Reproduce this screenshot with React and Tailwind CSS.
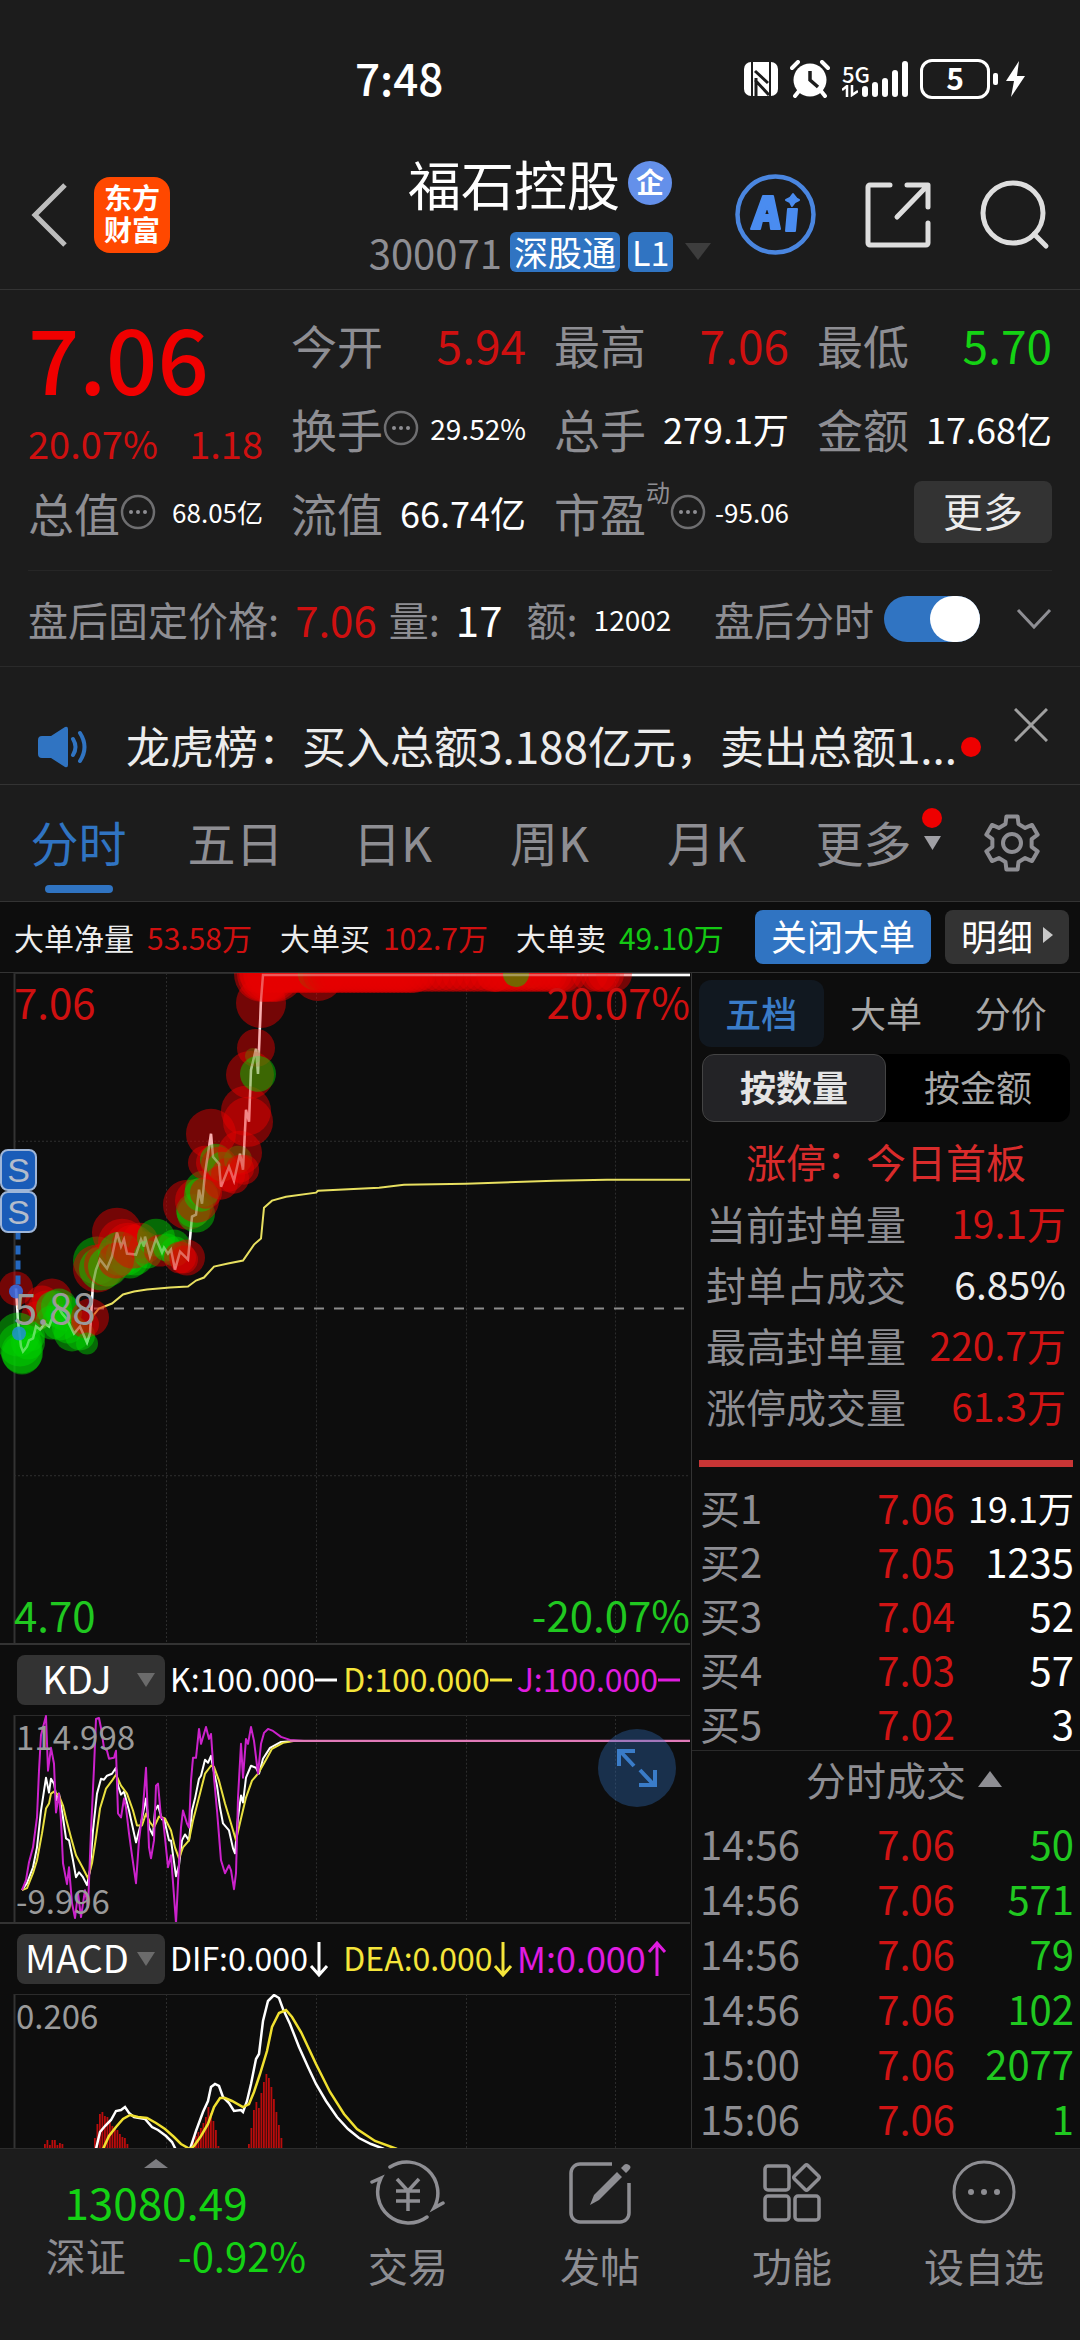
import React, { useState } from 'react';

const FONT = 'font-["Noto_Sans_CJK_SC",sans-serif]';

const quotes = [
  { label: '今开', value: '5.94', size: 'text-[46px]', color: 'text-[#cf1010]' },
  { label: '最高', value: '7.06', size: 'text-[46px]', color: 'text-[#cf1010]' },
  { label: '最低', value: '5.70', size: 'text-[46px]', color: 'text-[#14d214]' },
  { label: '换手', value: '29.52%', size: 'text-[28px]', color: 'text-white', info: true },
  { label: '总手', value: '279.1万', size: 'text-[36px]', color: 'text-white' },
  { label: '金额', value: '17.68亿', size: 'text-[36px]', color: 'text-white' },
  { label: '总值', value: '68.05亿', size: 'text-[26px]', color: 'text-white', info: true },
  { label: '流值', value: '66.74亿', size: 'text-[36px]', color: 'text-white' },
  { label: '市盈', value: '-95.06', size: 'text-[26px]', color: 'text-white', info: true, sup: '动' },
];

const periods = ['分时', '五日', '日K', '周K', '月K', '更多'];

const bigOrders = [
  { label: '大单净量', value: '53.58万', color: 'text-[#cf1010]' },
  { label: '大单买', value: '102.7万', color: 'text-[#cf1010]' },
  { label: '大单卖', value: '49.10万', color: 'text-[#14c814]' },
];

const limitStats = [
  { label: '当前封单量', value: '19.1万', color: 'text-[#d01414]' },
  { label: '封单占成交', value: '6.85%', color: 'text-[#ececec]' },
  { label: '最高封单量', value: '220.7万', color: 'text-[#d01414]' },
  { label: '涨停成交量', value: '61.3万', color: 'text-[#d01414]' },
];

const bids = [
  { name: '买1', price: '7.06', qty: '19.1万', small: true },
  { name: '买2', price: '7.05', qty: '1235' },
  { name: '买3', price: '7.04', qty: '52' },
  { name: '买4', price: '7.03', qty: '57' },
  { name: '买5', price: '7.02', qty: '3' },
];

const trades = [
  ['14:56', '7.06', '50'],
  ['14:56', '7.06', '571'],
  ['14:56', '7.06', '79'],
  ['14:56', '7.06', '102'],
  ['15:00', '7.06', '2077'],
  ['15:06', '7.06', '1'],
];

// Intraday chart
const PRICE =
  '16,316 18,349 21,374 23,379 27,374 29,368 33,366 36,354 40,357 45,351 49,354 54,341 58,334 62,341 67,347 74,361 80,354 87,370 90,361 93,311 96,297 100,287 107,296 112,284 117,260 121,274 124,267 127,281 136,282 141,267 144,274 145,264 150,284 156,266 162,280 164,275 168,281 171,277 175,297 180,279 188,287 192,244 196,242 199,217 202,231 205,201 211,161 213,184 219,191 221,214 229,194 234,208 240,181 243,197 246,137 249,149 251,97 256,76 258,101 261,27 263,2 690,2';
const AVERAGE =
  '21,371 40,357 58,347 87,351 99,336 112,331 123,322 134,319 147,317 170,315 188,314 196,308 204,305 214,294 228,291 243,288 254,272 261,266 264,235 272,228 286,224 316,220 318,218 379,215 404,212 466,211 554,208 607,207 690,207';

const R = '#e60000';
const G = '#00d000';
// [x, y, radius, color]
const BUBBLES = [
  [16, 316, 17, R], [42, 330, 17, R], [52, 326, 20, R], [36, 344, 15, R], [46, 336, 18, R],
  [18, 362, 22, G], [20, 372, 22, G], [22, 382, 20, G], [22, 380, 21, G], [28, 370, 17, G], [30, 364, 15, G],
  [54, 336, 18, G], [59, 334, 18, G], [64, 340, 18, G], [52, 350, 17, G], [60, 350, 18, G],
  [68, 355, 16, G], [72, 361, 18, G], [80, 363, 15, G], [90, 345, 19, R], [85, 352, 14, R], [87, 371, 11, G],
  [97, 288, 24, G], [97, 296, 24, R], [101, 296, 22, G], [106, 292, 22, R], [108, 294, 20, G],
  [117, 260, 25, R], [122, 270, 24, R], [128, 272, 22, R], [120, 281, 22, G], [126, 283, 20, G],
  [130, 288, 18, G], [135, 285, 18, G], [116, 288, 18, R], [133, 274, 22, R], [140, 268, 18, R],
  [145, 275, 16, R], [148, 282, 14, G], [156, 265, 19, G], [160, 278, 16, R], [167, 275, 14, G],
  [174, 273, 16, G], [175, 279, 15, G], [180, 285, 16, R], [187, 285, 18, R], [184, 287, 14, R],
  [188, 232, 25, R], [193, 238, 17, G], [196, 241, 19, G], [197, 228, 22, R], [203, 216, 18, G],
  [201, 222, 17, G], [206, 220, 16, R], [205, 190, 17, R], [211, 161, 25, R], [214, 190, 18, R],
  [216, 187, 16, G], [219, 192, 18, R], [222, 194, 15, G], [221, 210, 17, R], [228, 202, 17, R],
  [234, 206, 15, R], [238, 187, 14, G], [240, 180, 22, R], [244, 197, 15, R], [240, 196, 14, R],
  [246, 138, 25, R], [248, 149, 25, R], [250, 102, 24, R], [253, 83, 8, G], [256, 75, 19, R],
  [258, 101, 18, G], [261, 30, 25, R],
  // at the limit price
  [318, 3, 25, R],
  ...[262, 265, 268, 272, 276].map((x) => [x, 1, 28, R]),
  ...Array.from({ length: 14 }, (_, i) => [258 + i * 4, 1, 19, R]),
  [314, 1, 16, G], [322, 2, 13, G],
  ...Array.from({ length: 26 }, (_, i) => [314 + i * 4, 1, 19, R]),
  ...Array.from({ length: 12 }, (_, i) => [418 + i * 7, 1, 18, R]),
  [518, 1, 14, G], [532, 1, 14, G],
  ...Array.from({ length: 16 }, (_, i) => [494 + i * 5, 1, 18, R]),
  [516, 1, 13, G],
  [590, 1, 18, R], [598, 1, 18, R], [602, 1, 18, R], [606, 1, 18, R], [614, 1, 18, R],
];

const KDJ_K =
  '22,176 27,169 33,153 37,133 41,96 46,63 49,78 51,64 54,69 57,86 59,79 63,103 66,124 69,126 73,146 76,163 79,158 83,163 87,171 90,156 93,116 97,79 101,64 104,65 107,61 112,59 116,53 118,71 121,80 124,77 129,96 136,128 141,109 146,84 149,113 153,121 155,96 158,91 162,105 164,104 169,126 171,126 176,162 179,151 182,126 185,120 189,126 192,96 195,84 199,64 201,61 205,45 208,48 211,41 213,53 217,71 220,93 223,109 229,116 233,134 235,139 238,103 241,81 243,88 246,63 251,51 256,53 259,59 263,44 270,33 281,27 295,26';
const KDJ_D =
  '22,176 27,174 33,159 37,146 42,119 46,94 49,89 51,79 54,77 59,81 63,91 66,104 71,123 76,141 83,154 88,164 92,149 96,123 100,94 106,74 112,66 116,60 121,71 127,79 133,96 137,111 142,111 146,99 150,108 154,113 159,102 165,104 171,116 175,133 179,144 183,133 189,126 193,106 200,79 205,59 211,51 214,52 219,66 225,89 231,109 236,126 241,104 246,83 252,66 258,59 266,45 272,34 283,28 295,26';
const KDJ_J =
  '22,176 26,166 29,148 33,133 37,103 39,56 41,20 46,1 48,56 51,33 54,49 56,98 59,79 61,106 63,149 67,170 69,153 72,189 75,204 78,179 81,203 85,176 88,193 91,116 94,53 96,4 99,3 101,13 104,33 107,36 109,44 114,43 116,36 118,99 121,103 124,84 126,93 129,119 132,141 136,169 139,126 143,93 146,53 149,133 151,144 154,126 156,71 158,69 161,103 163,104 168,153 171,141 176,209 179,149 181,113 183,96 187,109 189,113 191,66 193,43 196,43 199,14 201,29 206,12 209,24 211,19 214,63 217,96 221,146 225,159 229,151 231,156 234,175 236,159 238,83 241,29 243,63 246,24 248,29 251,12 254,26 258,59 261,29 264,18 268,14 273,16 281,22 290,25 304,26';

const DIF =
  '96,155 100,138 105,132 111,126 116,117 121,116 125,113 129,119 134,123 145,125 152,133 158,136 166,142 172,148 176,156 183,170 190,155 196,137 203,118 208,107 211,93 215,90 219,92 223,103 229,109 234,117 241,116 243,118 247,107 251,90 256,65 259,60 263,27 268,7 274,1 279,4 283,15 290,30 299,53 308,73 316,90 326,107 337,123 348,135 359,144 371,150 384,155';
const DEA =
  '103,155 109,142 116,133 123,125 130,121 138,123 147,124 156,129 165,135 174,143 181,150 190,155 194,152 201,142 208,130 214,113 220,104 225,104 232,107 243,113 249,110 254,98 260,80 267,57 272,33 279,19 286,16 292,23 301,38 316,70 330,98 344,120 357,135 375,147 397,155';
const MACD_BARS = [
  { x: 44, heights: [4, 8, 3, 8, 8, 3, 5, 4] },
  { x: 94, heights: [10, 24, 34, 36, 32, 31, 27, 22, 20, 18, 14, 11, 10, 4] },
  { x: 190, heights: [2, 7, 12, 16, 20, 25, 31, 41, 35, 27, 18, 2] },
  { x: 248, heights: [4, 20, 38, 46, 40, 55, 66, 74, 70, 61, 49, 36, 23, 10] },
];

const Grid = ({ height }) => (
  <g fill="none" strokeWidth="1">
    {[166, 316, 466, 615].map((x) => (
      <path key={x} d={`M${x}.5 0V${height}`} stroke="#2c2c2c" strokeDasharray="2 2" />
    ))}
    <path d={`M14.5 0V${height}`} stroke="#333" strokeWidth="2" />
    <path d="M14 .5H690" stroke="#2c2c2c" />
  </g>
);

const Info = () => (
  <svg viewBox="0 0 36 36" className="h-9 w-9 shrink-0" aria-hidden="true">
    <circle cx="18" cy="18" r="16" fill="none" stroke="#6e6e70" strokeWidth="2.5" />
    <g fill="#8e8e93">
      <circle cx="11" cy="18" r="2" />
      <circle cx="18" cy="18" r="2" />
      <circle cx="25" cy="18" r="2" />
    </g>
  </svg>
);

const Gear = () => {
  const points = [];
  for (let i = 0; i < 6; i++) {
    [[-19, 20], [-12, 27], [12, 27], [19, 20]].forEach(([offset, radius]) => {
      const a = ((i * 60 - 90 + offset) * Math.PI) / 180;
      points.push(`${30 + radius * Math.cos(a)},${30 + radius * Math.sin(a)}`);
    });
  }
  return (
    <svg viewBox="0 0 60 60" className="h-[60px] w-[60px]" fill="none" stroke="#8e8e93" strokeWidth="4">
      <polygon points={points.join(' ')} strokeLinejoin="round" />
      <circle cx="30" cy="30" r="9" />
    </svg>
  );
};

const StatusBar = () => (
  <div className="flex h-[140px] items-center pt-[18px] pr-[54px] pl-[355px] text-white">
    <span className="mr-auto pb-1 text-[44px] leading-none font-medium">7:48</span>
    <svg viewBox="0 0 34 34" className="mr-3 h-[34px] w-[34px]">
      <rect width="34" height="34" rx="7" fill="#fff" />
      <path d="M8 0v34M26 0v34" stroke="#1c1c1c" strokeWidth="2" />
      <path d="M11 9L24 21M12 16v18M11 18L25 33" fill="none" stroke="#1c1c1c" strokeWidth="3" />
    </svg>
    <svg viewBox="0 0 40 38" className="mr-3 h-[38px] w-10">
      <circle cx="20" cy="20" r="16.5" fill="#fff" />
      <path d="M2 8L8 2M32 2l6 6M9 31l-4 5M31 31l4 5" stroke="#fff" strokeWidth="4" strokeLinecap="round" />
      <path d="M20 11v9l8 7" fill="none" stroke="#1c1c1c" strokeWidth="3.5" />
    </svg>
    <div className="mr-3 flex items-end">
      <div className="flex flex-col items-start">
        <span className="text-[22px] leading-6 font-medium">5G</span>
        <svg viewBox="0 0 16 12" className="h-3 w-4" fill="none" stroke="#fff" strokeWidth="2.5">
          <path d="M0 5L5 1V12M10 0V10L16 6" />
        </svg>
      </div>
      <svg viewBox="0 0 46 36" className="-ml-2 h-9 w-[46px]" stroke="#fff" strokeWidth="6" strokeLinecap="round">
        <path d="M3 28v5M13 24v9M23 20v13M33 12v21M43 3v30" />
      </svg>
    </div>
    <div className="flex h-10 w-[70px] items-center justify-center rounded-xl border-[3px] border-white pb-1 text-[30px] leading-none font-bold">
      5
    </div>
    <svg viewBox="0 0 36 40" className="h-10 w-9" fill="#fff">
      <rect x="3" y="14" width="5" height="12" rx="2" />
      <path d="M29 2L16 22h8l-3 16L35 17h-8z" />
    </svg>
  </div>
);

const Header = () => (
  <header className="grid h-[150px] grid-cols-[1fr_auto_1fr] items-center border-b border-[#333] px-[30px]">
    <div className="flex items-center gap-6">
      <button aria-label="返回">
        <svg viewBox="0 0 40 64" className="h-16 w-10" fill="none" stroke="#bdbdbd" strokeWidth="5">
          <path d="M35 2L5 32l30 30" />
        </svg>
      </button>
      <div className="flex h-[76px] w-[76px] flex-col items-center justify-center rounded-2xl bg-[#ff4800] pb-1 text-[28px] leading-8 font-bold text-white">
        <span>东方</span>
        <span>财富</span>
      </div>
    </div>
    <div className="flex flex-col items-center pt-[6px]">
      <h1 className="flex items-center gap-2 text-[53px] leading-[68px] text-white">
        福石控股
        <span className="flex h-11 w-11 items-center justify-center rounded-full bg-[#6490ea] pb-1 text-[28px] leading-none font-bold">
          企
        </span>
      </h1>
      <div className="flex h-[70px] items-center gap-2 text-[#8e8e93]">
        <span className="text-[40px] leading-none">300071</span>
        <span className="rounded-md bg-[#3074c2] px-1 pb-px text-[34px] leading-[39px] text-white">深股通</span>
        <span className="rounded-md bg-[#3074c2] px-1 pb-px text-[34px] leading-[39px] text-white">L1</span>
        <svg viewBox="0 0 26 18" className="ml-1 h-[18px] w-[26px]" fill="#3d3d3d">
          <path d="M0 0h26L13 17z" />
        </svg>
      </div>
    </div>
    <div className="flex items-center justify-end gap-12">
      <button aria-label="Ai" className="flex h-[81px] w-[81px] items-center justify-center">
        <svg viewBox="0 0 81 81" className="h-full w-full">
          <circle cx="40.5" cy="40.5" r="38" fill="none" stroke="#4a86e0" strokeWidth="4.5" />
          <g fill="#4a8cf0" stroke="#4a8cf0" strokeWidth="2" strokeLinejoin="round">
            <path d="M28 22h10l7 33h-9l-1-8h-8l-2 8h-9zM32 32l-3 9h6z" fillRule="evenodd" />
            <path d="M53 35h9l-2 22h-9z" />
            <path d="M58 20l4 5 2 1-4 2-3 4-2-4-4-2 4-2z" />
          </g>
        </svg>
      </button>
      <button aria-label="分享">
        <svg viewBox="0 0 68 68" className="h-[68px] w-[68px]" fill="none" stroke="#dedede" strokeWidth="5" strokeLinecap="round" strokeLinejoin="round">
          <path d="M26 4H6a2 2 0 0 0-2 2v56a2 2 0 0 0 2 2h56a2 2 0 0 0 2-2V42M43 4h21v22M63 5L33 36" />
        </svg>
      </button>
      <button aria-label="搜索">
        <svg viewBox="0 0 70 70" className="h-[70px] w-[70px]" fill="none" stroke="#dedede" strokeWidth="5" strokeLinecap="round">
          <circle cx="33" cy="33" r="30" />
          <path d="M54 54l12 12" />
        </svg>
      </button>
    </div>
  </header>
);

const Quote = () => {
  const cells = quotes.map((q) => (
    <div key={q.label} className="flex items-center justify-between whitespace-nowrap">
      <span className="flex items-center text-[46px] leading-none text-[#8e8e93]">
        {q.label}
        {q.sup && <sup className="top-0 -mt-10 text-[24px]">{q.sup}</sup>}
        {q.info && <Info />}
      </span>
      <span className={`${q.size} ${q.color} leading-none`}>{q.value}</span>
    </div>
  ));
  return (
    <section className="px-[28px]">
      <div className="grid auto-rows-[84px] grid-cols-4 gap-x-7 border-b border-[#262626] pt-3 pb-4">
        <div className="row-span-2 flex flex-col justify-between pt-4">
          <span className="text-[90px] leading-[76px] font-medium text-[#f00000]">7.06</span>
          <span className="flex justify-between text-[38px] leading-[54px] text-[#cf1010]">
            <span>20.07%</span>
            <span>1.18</span>
          </span>
        </div>
        {cells}
        <div className="flex items-center justify-end">
          <button className="h-[62px] w-[138px] rounded-lg bg-[#333] pb-1 text-[40px] leading-none text-[#ececec]">更多</button>
        </div>
      </div>
    </section>
  );
};

const AfterHours = () => {
  const [on, setOn] = useState(true);
  return (
    <div className="flex h-[96px] items-center border-b border-[#2a2a2a] px-[28px] text-[40px] leading-none whitespace-nowrap text-[#8e8e93]">
      <span>盘后固定价格:</span>
      <span className="ml-4 text-[42px] text-[#cf1010]">7.06</span>
      <span className="ml-3">量:</span>
      <span className="ml-4 text-[42px] text-white">17</span>
      <span className="ml-6">额:</span>
      <span className="ml-4 text-[28px] text-white">12002</span>
      <label className="ml-auto flex items-center gap-[10px]">
        盘后分时
        <input type="checkbox" role="switch" checked={on} onChange={() => setOn(!on)} className="peer sr-only" />
        <span className="flex h-[46px] w-24 justify-start rounded-full bg-[#555] peer-checked:justify-end peer-checked:bg-[#3074c2]">
          <span className="h-[46px] w-[50px] rounded-full bg-white" />
        </span>
      </label>
      <button aria-label="展开" className="ml-9">
        <svg viewBox="0 0 36 22" className="h-[22px] w-9" fill="none" stroke="#8e8e93" strokeWidth="3">
          <path d="M2 2l16 17L34 2" />
        </svg>
      </button>
    </div>
  );
};

const NewsBar = () => (
  <div className="flex h-[118px] items-center border-b border-[#333] pt-[42px] pr-[32px] pl-[38px]">
    <svg viewBox="0 0 50 42" className="h-[42px] w-[50px] shrink-0">
      <path d="M4 10h9L27 1q3-1 3 2v36q0 3-3 2L13 32H4q-4 0-4-4V14q0-4 4-4z" fill="#3074c2" />
      <path d="M35 13q5 8 0 16M42 7q9 14 0 28" fill="none" stroke="#3074c2" strokeWidth="4" strokeLinecap="round" />
    </svg>
    <p className="ml-[38px] pb-1 text-[44px] leading-[60px] whitespace-nowrap text-[#ececec]">
      龙虎榜：买入总额3.188亿元，卖出总额1...
    </p>
    <span className="ml-1 h-5 w-5 shrink-0 rounded-full bg-[#ee0000]" />
    <button aria-label="关闭" className="-mt-11 ml-auto">
      <svg viewBox="0 0 34 34" className="h-[34px] w-[34px]" stroke="#a0a0a0" strokeWidth="3">
        <path d="M1 1l32 32M33 1L1 33" />
      </svg>
    </button>
  </div>
);

const PeriodTabs = () => {
  const [active, setActive] = useState('分时');
  return (
    <nav className="flex h-[117px] items-stretch border-b border-[#333] pr-[38px]">
      {periods.map((p) => (
        <button
          key={p}
          onClick={() => setActive(p)}
          className={`relative flex flex-1 items-center justify-center pb-1 text-[48px] leading-none ${
            active === p ? 'text-[#3074c2]' : 'text-[#8e8e93]'
          }`}
        >
          {p}
          {active === p && <span className="absolute bottom-2 h-2 w-[68px] rounded bg-[#3074c2]" />}
          {p === '更多' && (
            <span className="absolute left-full -ml-5 flex flex-col items-center gap-2 pb-6">
              <span className="h-5 w-5 rounded-full bg-[#ee0000]" />
              <svg viewBox="0 0 17 14" className="h-[14px] w-[17px]" fill="#a0a0a5">
                <path d="M0 0h17L8.500 14z" />
              </svg>
            </span>
          )}
        </button>
      ))}
      <button aria-label="设置" className="ml-10 flex items-center">
        <Gear />
      </button>
    </nav>
  );
};

const BigOrderBar = () => (
  <div className="flex h-[71px] items-center border-b border-[#333] pr-[11px] pl-[14px] text-[30px] leading-none whitespace-nowrap text-[#ececec]">
    {bigOrders.map((o) => (
      <span key={o.label} className="mr-7 flex gap-[13px]">
        {o.label}
        <span className={o.color}>{o.value}</span>
      </span>
    ))}
    <button className="ml-auto h-[54px] w-44 rounded-lg bg-[#3074c2] pb-1 text-[36px] leading-none text-white">关闭大单</button>
    <button className="ml-[14px] flex h-[54px] w-[124px] items-center justify-center gap-[10px] rounded-lg bg-[#333] pb-1 text-[36px] leading-none text-white">
      明细
      <svg viewBox="0 0 10 16" className="h-4 w-[10px]" fill="#c8c8c8">
        <path d="M0 0l10 8-10 8z" />
      </svg>
    </button>
  </div>
);

const AXIS = 'absolute text-[42px] leading-none';
const MARK = 'w-[37px] rounded-lg border-2 border-[#9fb6d8] bg-[#1a5cb8]';

const IntradayChart = () => (
  <div className="relative h-[672px] border-b-2 border-[#333]">
    <svg viewBox="0 0 690 671" preserveAspectRatio="none" className="h-full w-full">
      <Grid height={671} />
      <path d="M14 168.500H690M14 503.500H690" stroke="#303030" strokeDasharray="2 2" />
      <path d="M94 336H690" stroke="#8c8c8c" strokeWidth="2" strokeDasharray="10 10" />
      <polyline points={AVERAGE} fill="none" stroke="#e8e060" strokeWidth="2" />
      <polyline points={PRICE} fill="none" stroke="#fff" strokeWidth="2.500" />
      {BUBBLES.map(([x, y, r, color], i) => (
        <circle key={i} cx={x} cy={y} r={r} fill={color} fillOpacity="0.480" />
      ))}
      <polyline points={PRICE} fill="none" stroke="#fff" strokeWidth="2.500" opacity="0.350" />
      <path d="M18 258v60" stroke="#2468c0" strokeWidth="5" strokeDasharray="9 6" />
      <circle cx="16" cy="319" r="7" fill="#3570e8" fillOpacity="0.850" />
      <circle cx="19" cy="361" r="7" fill="#2090d0" fillOpacity="0.850" />
    </svg>
    <span className={`${AXIS} top-[7px] left-[14px] text-[#cf1010]`}>7.06</span>
    <span className={`${AXIS} top-[7px] right-0 text-[#cf1010]`}>20.07%</span>
    <span className={`${AXIS} top-[312px] left-[14px] text-[#9a9a9a]`}>5.88</span>
    <span className={`${AXIS} bottom-[8px] left-[14px] text-[#20c820]`}>4.70</span>
    <span className={`${AXIS} right-0 bottom-[8px] text-[#20c820]`}>-20.07%</span>
    <div className='absolute top-[176px] left-0 flex flex-col text-center font-["Liberation_Sans",sans-serif] text-[34px] leading-[38px] text-[#b4bccb]'>
      <span className={MARK}>S</span>
      <span className={MARK}>S</span>
    </div>
  </div>
);

const IndicatorHead = ({ name, children }) => (
  <div className="flex h-[70px] items-center pl-[17px]">
    <label className="relative mr-[5px] flex h-[50px] w-[148px] shrink-0 items-center rounded-lg bg-[#333]">
      <select
        aria-label="指标"
        defaultValue={name}
        className="h-full w-full appearance-none bg-transparent pr-7 pb-1 text-center text-[38px] leading-none text-white [text-align-last:center]"
      >
        <option>KDJ</option>
        <option>MACD</option>
      </select>
      <svg viewBox="0 0 18 14" className="pointer-events-none absolute right-[10px] h-[14px] w-[18px]" fill="#6b6b6b">
        <path d="M0 0h18L9 14z" />
      </svg>
    </label>
    <div className="grid flex-1 grid-cols-3 pb-1 whitespace-nowrap">{children}</div>
  </div>
);

const Reading = ({ text, color, trend, size = 'text-[32px]' }) => (
  <span className={`flex items-center leading-none ${size} ${color}`}>
    {text}
    {trend === 'flat' ? (
      <svg viewBox="0 0 24 36" className="mt-1 h-9 w-6" stroke="currentColor" strokeWidth="3">
        <path d="M0 18h22" />
      </svg>
    ) : (
      <svg viewBox="0 0 22 38" className="mt-1 h-[38px] w-[22px]" fill="none" stroke="currentColor" strokeWidth="3">
        <path d={trend === 'down' ? 'M11 2v33M3 26l8 9 8-9' : 'M11 36V3M3 12l8-9 8 9'} />
      </svg>
    )}
  </span>
);

const Charts = () => (
  <div className="flex min-w-0 flex-1 flex-col pr-px">
    <IntradayChart />
    <IndicatorHead name="KDJ">
      <Reading text="K:100.000" color="text-white" trend="flat" />
      <Reading text="D:100.000" color="text-[#f5e53a]" trend="flat" />
      <Reading text="J:100.000" color="text-[#e01ce0]" trend="flat" />
    </IndicatorHead>
    <div className="relative h-[209px] border-b-2 border-[#333]">
      <svg viewBox="0 0 690 208" preserveAspectRatio="none" className="h-full w-full">
        <Grid height={208} />
        <g fill="none" strokeWidth="2" strokeLinejoin="round">
          <polyline points={KDJ_K} stroke="#fff" />
          <polyline points={KDJ_D} stroke="#e8e040" />
          <polyline points={KDJ_J} stroke="#cc22cc" />
          <path d="M290 26H690" stroke="#e07ab8" strokeWidth="2.500" />
        </g>
      </svg>
      <span className="absolute top-[5px] left-4 text-[33px] leading-none text-[#9a9a9a]">114.998</span>
      <span className="absolute bottom-[5px] left-4 text-[33px] leading-none text-[#9a9a9a]">-9.996</span>
      <button
        aria-label="全屏"
        className="absolute top-[14px] right-[14px] flex h-[78px] w-[78px] items-center justify-center rounded-full bg-[#3074c2]/35"
      >
        <svg viewBox="0 0 40 40" className="h-10 w-10" fill="none" stroke="#3a7cc8" strokeWidth="4">
          <path d="M2 18V3h16M3 3l14 15M38 22v15H22M37 37L23 22" />
        </svg>
      </button>
    </div>
    <IndicatorHead name="MACD">
      <Reading text="DIF:0.000" color="text-white" trend="down" />
      <Reading text="DEA:0.000" color="text-[#f5e53a]" trend="down" />
      <Reading text="M:0.000" color="text-[#e01ce0]" trend="up" size="text-[36px]" />
    </IndicatorHead>
    <div className="relative h-[154px] overflow-hidden">
      <svg viewBox="0 0 690 154" preserveAspectRatio="none" className="h-full w-full">
        <Grid height={154} />
        {MACD_BARS.map((group) =>
          group.heights.map((h, i) => (
            <rect key={`${group.x}-${i}`} x={group.x + i * 2.5} y={154 - h} width="1.800" height={h} fill="#b80c0c" />
          ))
        )}
        <polyline points={DIF} fill="none" stroke="#fff" strokeWidth="2.500" />
        <polyline points={DEA} fill="none" stroke="#f0e030" strokeWidth="2.500" />
      </svg>
      <span className="absolute top-[5px] left-4 text-[33px] leading-none text-[#9a9a9a]">0.206</span>
    </div>
  </div>
);

const SidePanel = () => {
  const [tab, setTab] = useState('五档');
  const [mode, setMode] = useState('按数量');
  return (
    <aside className="w-[389px] shrink-0 border-l border-[#333] leading-none">
      <div className="grid grid-cols-3 px-[7px] pt-[7px]">
        {['五档', '大单', '分价'].map((t) => (
          <button
            key={t}
            onClick={() => setTab(t)}
            className={`h-[67px] rounded-xl pb-1 text-[36px] leading-none ${
              tab === t ? 'bg-[#111820] font-medium text-[#3a7cc8]' : 'text-[#a8a8a8]'
            }`}
          >
            {t}
          </button>
        ))}
      </div>
      <div className="mx-[10px] mt-[7px] grid h-[68px] grid-cols-2 rounded-xl bg-black">
        {['按数量', '按金额'].map((m) => (
          <button
            key={m}
            onClick={() => setMode(m)}
            className={`rounded-xl pb-1 text-[36px] leading-none ${
              mode === m ? 'border border-[#444] bg-[#232326] font-bold text-[#e4e4e4]' : 'text-[#a8a8a8]'
            }`}
          >
            {m}
          </button>
        ))}
      </div>
      <p className="mt-[9px] text-center text-[40px] leading-[61px] text-[#d92b2b]">涨停：今日首板</p>
      <dl className="px-[14px] text-[40px]">
        {limitStats.map((s) => (
          <div key={s.label} className="flex h-[61px] items-center justify-between">
            <dt className="text-[#8e8e93]">{s.label}</dt>
            <dd className={`text-[39px] ${s.color}`}>{s.value}</dd>
          </div>
        ))}
      </dl>
      <div className="mx-[7px] mt-6 h-[7px] bg-[#c83535]" />
      <table className="mt-[13px] w-full table-fixed text-[40px]">
        <tbody>
          {bids.map((b) => (
            <tr key={b.name} className="h-[54px]">
              <td className="w-[100px] pl-2 text-[#8e8e93]">{b.name}</td>
              <td className="text-right text-[#d01414]">{b.price}</td>
              <td className={`w-[125px] pr-[6px] text-right text-white ${b.small ? 'text-[36px]' : ''}`}>{b.qty}</td>
            </tr>
          ))}
        </tbody>
      </table>
      <button className="flex h-[65px] w-full items-center justify-center gap-3 border-t border-[#2a2a2a] pb-2 pl-9 text-[40px] leading-none text-[#8e8e93]">
        分时成交
        <svg viewBox="0 0 24 16" className="h-4 w-6" fill="#8e8e93">
          <path d="M12 0l12 16H0z" />
        </svg>
      </button>
      <table className="w-full table-fixed text-[40px]">
        <tbody>
          {trades.map(([time, price, qty], i) => (
            <tr key={i} className="h-[55px]">
              <td className="w-[120px] pl-2 text-[#8e8e93]">{time}</td>
              <td className="text-right text-[#d01414]">{price}</td>
              <td className="w-[125px] pr-[6px] text-right text-[#20c820]">{qty}</td>
            </tr>
          ))}
        </tbody>
      </table>
    </aside>
  );
};

const NAV_SVG = 'h-[72px] w-[76px]';
const navItems = [
  {
    label: '交易',
    icon: (
      <svg viewBox="0 0 76 72" className={NAV_SVG} fill="none" stroke="#8e8e93" strokeWidth="3.500" strokeLinecap="round">
        <path d="M20 10A31 31 0 0 1 64 51L73 46M57 60A31 31 0 0 1 11 21L2 25" />
        <path d="M27 22l11 12 11-12M26 34h24M26 44h24M38 34v20" strokeLinecap="butt" />
      </svg>
    ),
  },
  {
    label: '发帖',
    icon: (
      <svg viewBox="0 0 76 72" className={NAV_SVG} fill="none" stroke="#8e8e93" strokeWidth="3.500">
        <path d="M50 7H18a9 9 0 0 0-9 9v40a9 9 0 0 0 9 9h40a9 9 0 0 0 9-9V26" />
        <path d="M55 15l5 5-23 23-9 5 4-10zM59 11l3-3q2-2 5 0t0 5l-3 3z" fill="#8e8e93" stroke="none" />
      </svg>
    ),
  },
  {
    label: '功能',
    icon: (
      <svg viewBox="0 0 76 72" className={NAV_SVG} fill="none" stroke="#8e8e93" strokeWidth="3.500">
        <rect x="11" y="9" width="24" height="24" rx="3" />
        <rect x="11" y="39" width="24" height="24" rx="3" />
        <rect x="41" y="39" width="24" height="24" rx="3" />
        <rect x="43" y="11" width="19" height="19" rx="2" transform="rotate(45 52.500 20.500)" />
      </svg>
    ),
  },
  {
    label: '设自选',
    icon: (
      <svg viewBox="0 0 76 72" className={NAV_SVG} fill="none" stroke="#8e8e93" strokeWidth="3">
        <circle cx="38" cy="35" r="30" />
        <g fill="#8e8e93" stroke="none">
          <circle cx="25" cy="35" r="3" />
          <circle cx="38" cy="35" r="3" />
          <circle cx="51" cy="35" r="3" />
        </g>
      </svg>
    ),
  },
];

const BottomNav = () => (
  <footer className="flex flex-1 items-start border-t border-[#2c2c2c] text-[40px] leading-none text-[#8e8e93]">
    <div className="flex w-[312px] flex-col items-center pt-[10px]">
      <svg viewBox="0 0 24 9" className="h-[9px] w-6" fill="#7c7c80">
        <path d="M12 0l12 9H0z" />
      </svg>
      <span className="mt-2 text-[44px] leading-[50px] text-[#14d214]">13080.49</span>
      <span className="ml-10 flex gap-[52px] leading-[58px]">
        深证
        <span className="text-[#14d214]">-0.92%</span>
      </span>
    </div>
    <nav className="grid flex-1 grid-cols-4 pt-2">
      {navItems.map((item) => (
        <a key={item.label} href="#" className="flex flex-col items-center">
          {item.icon}
          <span className="mt-[7px] leading-[58px]">{item.label}</span>
        </a>
      ))}
    </nav>
  </footer>
);

const App = () => (
  <div className={`flex min-h-screen flex-col bg-[#1c1c1c] ${FONT}`}>
    <StatusBar />
    <Header />
    <Quote />
    <AfterHours />
    <NewsBar />
    <PeriodTabs />
    <main className="bg-[#0d0d0d]">
      <BigOrderBar />
      <div className="flex">
        <Charts />
        <SidePanel />
      </div>
    </main>
    <BottomNav />
  </div>
);

export default App;
